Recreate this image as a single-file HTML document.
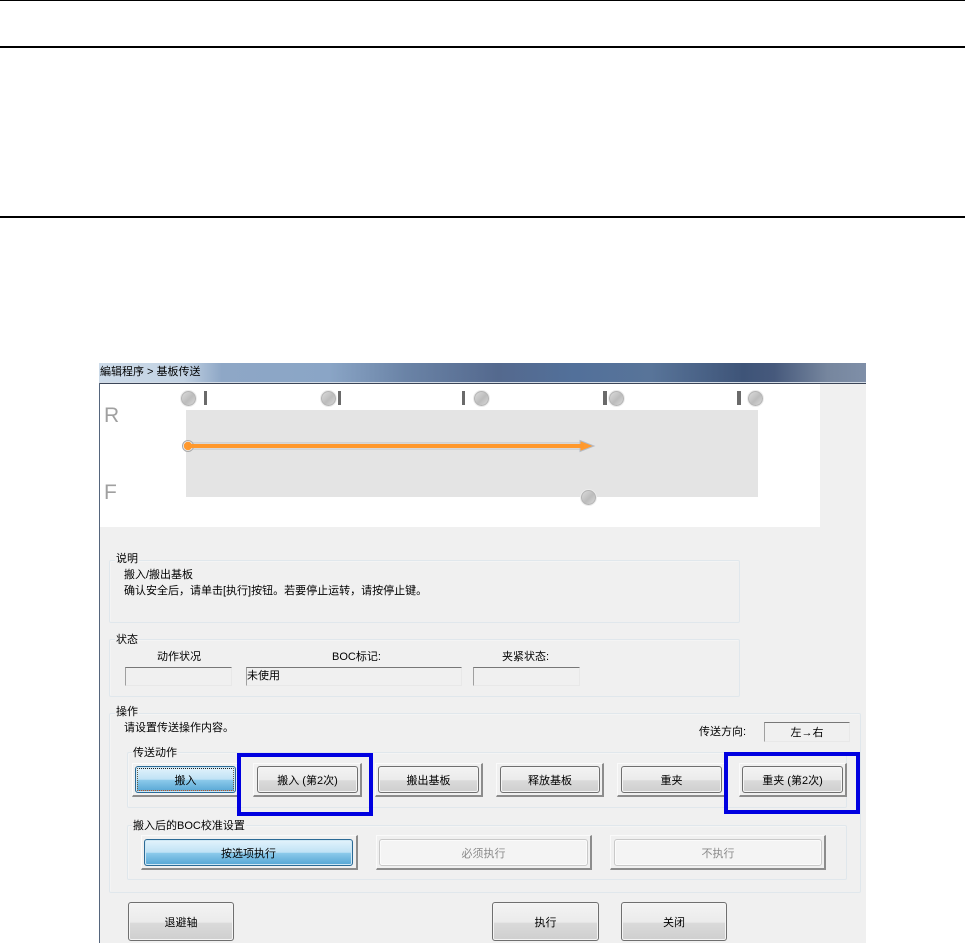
<!DOCTYPE html>
<html lang="zh">
<head>
<meta charset="utf-8">
<style>
html,body{margin:0;padding:0;background:#fff;}
body{width:965px;height:943px;position:relative;overflow:hidden;font-family:"Liberation Sans","Noto Sans CJK SC",sans-serif;font-size:11px;color:#000;}
div,svg{position:absolute;box-sizing:border-box;}
.hl{left:0;width:965px;background:#000;}
.t{white-space:nowrap;line-height:14px;height:14px;}
.g{border:1px solid #e0e7ec;border-radius:2px;box-shadow:inset 1px 1px 0 #f4f4f4;}
.lb{background:#f0f0f0;padding:0 1px;white-space:nowrap;line-height:14px;height:14px;}
.f{border:1px solid #e8e8e8;border-top:1px solid #777;border-left:1px solid #a0a0a0;background:#f0f0f0;}
.o{border-right:2px solid #8c8c8c;border-bottom:2px solid #8c8c8c;border-top:1px solid #fafafa;border-left:1px solid #fafafa;}
.b{border:1px solid #6f6f6f;border-radius:3px;display:flex;align-items:center;justify-content:center;white-space:nowrap;
background:linear-gradient(#f3f3f3 0,#ebebeb 52%,#dadada 54%,#cfcfcf 100%);box-shadow:inset 0 0 0 1px #f5f5f5;}
.bl{border:1px solid #2b6a96;background:linear-gradient(#e3f3fc 0,#bfe2f5 50%,#8ccaeb 52%,#55a5d4 100%);box-shadow:inset 0 0 0 1px #cfe8f5;}
.d{border:1px solid #c9c9c9;background:#f4f4f4;color:#8a8a8a;box-shadow:inset 0 0 0 1px #fbfbfb;}
.blue{border:4px solid #0000e0;}
.c{width:15px;height:15px;border-radius:50%;background:linear-gradient(135deg,#dcdcdc,#bcbcbc 55%,#d8d8d8);border:1px solid #b4b4b4;box-shadow:0 0 0 1px #ececec;}
.m{width:3px;height:14px;top:391px;background:#6a6a6a;}
</style>
</head>
<body>
<div class="hl" style="top:0;height:1px"></div>
<div class="hl" style="top:46px;height:2px"></div>
<div class="hl" style="top:216px;height:2px"></div>

<!-- window -->
<div style="left:99px;top:363px;width:767px;height:580px;background:#f0f0f0;"></div>
<div style="left:99px;top:363px;width:767px;height:19px;background:linear-gradient(90deg,#cddbe9 0,#c2d2e3 11%,#8ea7c6 16%,#8aa5c6 30%,#6a83a6 40%,#54698e 52%,#52709a 62%,#587499 72%,#3e5478 84%,#46597c 88%,#76869e 95%,#7f8fa8 100%);"></div>
<div style="left:99px;top:382px;width:767px;height:1px;background:#d4dce6;"></div>
<div style="left:99px;top:383px;width:767px;height:1px;background:#3c4658;"></div>
<div style="left:99px;top:383px;width:1px;height:560px;background:#55657c;"></div>
<div class="t" style="left:100px;top:365px;">編辑程序 &gt; 基板传送</div>

<!-- white diagram panel -->
<div style="left:100px;top:384px;width:720px;height:143px;background:#fff;"></div>
<div style="left:186px;top:410px;width:572px;height:87px;background:#e4e4e4;"></div>
<div class="t" style="left:104px;top:405px;font-size:21px;line-height:22px;height:22px;color:#a0a0a0;">R</div>
<div class="t" style="left:104px;top:482px;font-size:21px;line-height:22px;height:22px;color:#a0a0a0;">F</div>

<div class="c" style="left:181px;top:391px;"></div>
<div class="c" style="left:321px;top:391px;"></div>
<div class="c" style="left:474px;top:391px;"></div>
<div class="c" style="left:609px;top:391px;"></div>
<div class="c" style="left:748px;top:391px;"></div>
<div class="c" style="left:581px;top:490px;"></div>
<div class="m" style="left:204px;"></div>
<div class="m" style="left:338px;"></div>
<div class="m" style="left:462px;"></div>
<div class="m" style="left:603px;width:4px;"></div>
<div class="m" style="left:737px;width:4px;"></div>

<svg style="left:180px;top:436px;" width="420" height="20" viewBox="0 0 420 20">
<rect x="8" y="7" width="394" height="6" fill="#f0f0f0" stroke="#c0c0c0" stroke-width="1"/>
<path d="M400 4.5 L414 10 L400 15.500 Z" fill="#ff9a30" stroke="#b4bcc8" stroke-width="1"/>
<circle cx="8" cy="10" r="5.500" fill="#f0f0f0" stroke="#a8a8a8"/>
<circle cx="8" cy="10" r="4.200" fill="#ff9a30"/>
<rect x="8" y="8" width="396" height="4" fill="#ff982c"/>
</svg>

<!-- 说明 -->
<div class="g" style="left:109px;top:560px;width:631px;height:63px;"></div>
<div class="lb" style="left:115px;top:552px;">说明</div>
<div class="t" style="left:124px;top:568px;">搬入/搬出基板</div>
<div class="t" style="left:124px;top:584px;">确认安全后，请单击[执行]按钮。若要停止运转，请按停止键。</div>

<!-- 状态 -->
<div class="g" style="left:109px;top:639px;width:631px;height:58px;"></div>
<div class="lb" style="left:115px;top:633px;">状态</div>
<div class="t" style="left:157px;top:650px;">动作状况</div>
<div class="t" style="left:332px;top:650px;">BOC标记:</div>
<div class="t" style="left:502px;top:650px;">夹紧状态:</div>
<div class="f" style="left:125px;top:667px;width:107px;height:19px;"></div>
<div class="f" style="left:246px;top:667px;width:216px;height:19px;"></div>
<div class="t" style="left:247px;top:669px;">未使用</div>
<div class="f" style="left:473px;top:667px;width:107px;height:19px;"></div>

<!-- 操作 -->
<div class="g" style="left:109px;top:713px;width:752px;height:180px;"></div>
<div class="lb" style="left:115px;top:705px;">操作</div>
<div class="t" style="left:124px;top:721px;">请设置传送操作内容。</div>
<div class="t" style="left:699px;top:725px;">传送方向:</div>
<div class="f" style="left:764px;top:722px;width:86px;height:20px;display:flex;align-items:center;justify-content:center;">左→右</div>

<!-- 传送动作 -->
<div class="g" style="left:127px;top:752px;width:720px;height:56px;"></div>
<div class="lb" style="left:132px;top:746px;">传送动作</div>

<div class="o" style="left:132px;top:763px;width:108px;height:34px;"></div>
<div class="b bl" style="left:135px;top:766px;width:101px;height:27px;">搬入</div>
<div style="left:137px;top:768px;width:97px;height:23px;border:1px dotted #222;border-bottom:1px dotted #c0501c;border-left-color:#6a5a40;border-right-color:#6a5a40;"></div>

<div class="o" style="left:253px;top:763px;width:109px;height:34px;"></div>
<div class="b" style="left:257px;top:766px;width:101px;height:27px;">搬入 (第2次)</div>
<div class="o" style="left:375px;top:763px;width:108px;height:34px;"></div>
<div class="b" style="left:378px;top:766px;width:101px;height:27px;">搬出基板</div>
<div class="o" style="left:496px;top:763px;width:108px;height:34px;"></div>
<div class="b" style="left:500px;top:766px;width:100px;height:27px;">释放基板</div>
<div class="o" style="left:617px;top:763px;width:109px;height:34px;"></div>
<div class="b" style="left:621px;top:766px;width:101px;height:27px;">重夹</div>
<div class="o" style="left:739px;top:763px;width:108px;height:34px;"></div>
<div class="b" style="left:742px;top:766px;width:101px;height:27px;">重夹 (第2次)</div>

<!-- 校准设置 -->
<div class="g" style="left:127px;top:825px;width:720px;height:55px;"></div>
<div class="lb" style="left:132px;top:819px;">搬入后的BOC校准设置</div>

<div class="o" style="left:141px;top:835px;width:217px;height:35px;"></div>
<div class="b bl" style="left:144px;top:839px;width:209px;height:27px;">按选项执行</div>
<div class="o" style="left:376px;top:835px;width:216px;height:35px;"></div>
<div class="b d" style="left:379px;top:839px;width:209px;height:27px;">必须执行</div>
<div class="o" style="left:610px;top:835px;width:216px;height:35px;"></div>
<div class="b d" style="left:614px;top:839px;width:208px;height:27px;">不执行</div>

<!-- blue highlight -->
<div class="blue" style="left:237px;top:753px;width:136px;height:63px;"></div>
<div class="blue" style="left:724px;top:752px;width:136px;height:62px;"></div>

<!-- bottom buttons -->
<div class="b" style="left:128px;top:902px;width:106px;height:39px;">退避轴</div>
<div class="b" style="left:492px;top:902px;width:107px;height:39px;">执行</div>
<div class="b" style="left:621px;top:902px;width:106px;height:39px;">关闭</div>
</body>
</html>
